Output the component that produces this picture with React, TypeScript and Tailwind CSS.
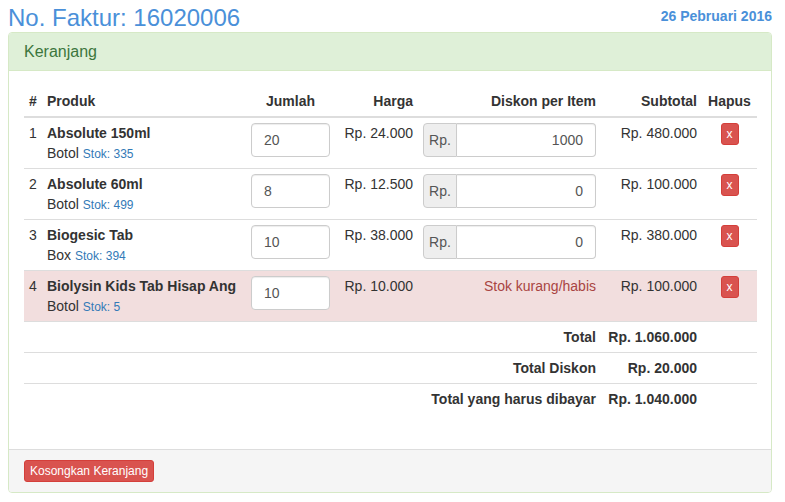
import React from 'react'

type Item = {
  no: number
  name: string
  unit: string
  stock: number
  qty: string
  price: string
  discount: string | null
  subtotal: string
  danger?: boolean
}

const items: Item[] = [
  { no: 1, name: 'Absolute 150ml', unit: 'Botol', stock: 335, qty: '20', price: 'Rp. 24.000', discount: '1000', subtotal: 'Rp. 480.000' },
  { no: 2, name: 'Absolute 60ml', unit: 'Botol', stock: 499, qty: '8', price: 'Rp. 12.500', discount: '0', subtotal: 'Rp. 100.000' },
  { no: 3, name: 'Biogesic Tab', unit: 'Box', stock: 394, qty: '10', price: 'Rp. 38.000', discount: '0', subtotal: 'Rp. 380.000' },
  { no: 4, name: 'Biolysin Kids Tab Hisap Ang', unit: 'Botol', stock: 5, qty: '10', price: 'Rp. 10.000', discount: null, subtotal: 'Rp. 100.000', danger: true },
]

const totals = [
  { label: 'Total', value: 'Rp. 1.060.000' },
  { label: 'Total Diskon', value: 'Rp. 20.000' },
  { label: 'Total yang harus dibayar', value: 'Rp. 1.040.000' },
]

export default function App() {
  return (
    <div className="min-h-[502px] bg-white px-2 text-[14px] leading-[20px] text-[#333]" style={{ fontFamily: '"Liberation Sans", Arial, sans-serif' }}>
      <div className="flex w-[764px] items-start justify-between">
        <h3 className="mt-[5px] text-[24px] leading-[26.4px] text-[#4a90d9]">No. Faktur: 16020006</h3>
        <span className="mt-[6px] font-bold text-[#4a90d9]">26 Pebruari 2016</span>
      </div>

      <div className="mt-[1px] w-[764px] rounded border border-[#d6e9c6]">
        <div className="rounded-t-[3px] border-b border-[#d6e9c6] bg-[#dff0d8] px-[15px] py-[10px] text-[16px] leading-[17px] text-[#3c763d]">
          Keranjang
        </div>

        <div className="p-[15px]">
          <table className="mb-5 w-[733px] table-fixed border-collapse">
            <colgroup>
              <col className="w-[18px]" />
              <col className="w-[204px]" />
              <col className="w-[89px]" />
              <col className="w-[83px]" />
              <col className="w-[183px]" />
              <col className="w-[101px]" />
              <col className="w-[55px]" />
            </colgroup>
            <thead>
              <tr className="border-b-2 border-[#ddd] font-bold">
                <th className="p-[5px] text-left">#</th>
                <th className="p-[5px] text-left">Produk</th>
                <th className="p-[5px] text-center">Jumlah</th>
                <th className="p-[5px] text-right">Harga</th>
                <th className="p-[5px] text-right">Diskon per Item</th>
                <th className="p-[5px] text-right">Subtotal</th>
                <th className="p-[5px] text-center">Hapus</th>
              </tr>
            </thead>
            <tbody>
              {items.map((item) => (
                <tr key={item.no} className={`border-t border-[#ddd] align-top ${item.danger ? 'bg-[#f2dede]' : ''}`}>
                  <td className="p-[5px]">{item.no}</td>
                  <td className="p-[5px]">
                    <p className="h-5 font-bold">{item.name}</p>
                    <p className="h-5">
                      {item.unit} <small className="text-[12px] leading-none text-[#337ab7]">Stok: {item.stock}</small>
                    </p>
                  </td>
                  <td className="p-[5px]">
                    <input
                      readOnly
                      value={item.qty}
                      className="h-[34px] w-full rounded border border-[#ccc] bg-white px-3 text-[14px] text-[#555] shadow-[inset_0_1px_1px_rgba(0,0,0,0.075)] outline-none"
                    />
                  </td>
                  <td className="p-[5px] text-right">{item.price}</td>
                  <td className="p-[5px] text-right">
                    {item.discount !== null ? (
                      <div className="flex h-[34px]">
                        <span className="flex w-[34px] items-center justify-center rounded-l border border-[#ccc] bg-[#eee] text-[#555]">Rp.</span>
                        <input
                          readOnly
                          value={item.discount}
                          className="min-w-0 flex-1 rounded-r border border-l-0 border-[#ccc] bg-white px-3 text-right text-[14px] text-[#555] shadow-[inset_0_1px_1px_rgba(0,0,0,0.075)] outline-none"
                        />
                      </div>
                    ) : (
                      <span className="text-[#a94442]">Stok kurang/habis</span>
                    )}
                  </td>
                  <td className="p-[5px] text-right">{item.subtotal}</td>
                  <td className="p-[5px] text-center">
                    <button className="h-[22px] w-[18px] rounded-[3px] border border-[#d43f3a] bg-[#d9534f] text-[12px] leading-[18px] text-white">x</button>
                  </td>
                </tr>
              ))}
              {totals.map((t) => (
                <tr key={t.label} className="border-t border-[#ddd] font-bold">
                  <td colSpan={5} className="p-[5px] text-right">{t.label}</td>
                  <td className="p-[5px] text-right">{t.value}</td>
                  <td className="p-[5px]"></td>
                </tr>
              ))}
            </tbody>
          </table>
        </div>

        <div className="rounded-b-[3px] border-t border-[#ddd] bg-[#f5f5f5] px-[15px] py-[10px]">
          <button className="block h-[22px] rounded-[3px] border border-[#d43f3a] bg-[#d9534f] px-[5px] text-[12px] leading-[18px] text-white">
            Kosongkan Keranjang
          </button>
        </div>
      </div>
    </div>
  )
}
